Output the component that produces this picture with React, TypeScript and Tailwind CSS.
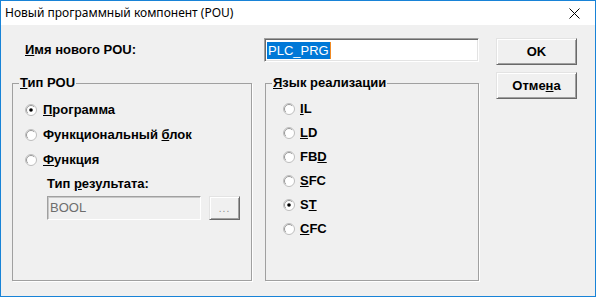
import React from 'react'

function Radio({ checked }: { checked?: boolean }) {
  return (
    <svg width="12" height="12" viewBox="0 0 12 12" className="shrink-0">
      <circle cx="6" cy="6" r="5.5" fill="#fff" stroke="#bcbcbc" />
      <path d="M2.8 9.2 A4.5 4.5 0 0 1 9.2 2.8" fill="none" stroke="#9a9a9a" />
      {checked && <circle cx="6" cy="6" r="1.8" fill="#000" />}
    </svg>
  )
}

function Option({ checked, children, gap }: { checked?: boolean; children: React.ReactNode; gap: string }) {
  return (
    <div className={`flex items-center ${gap}`}>
      <Radio checked={checked} />
      <span className="font-bold text-[13px] leading-[16px] text-black">{children}</span>
    </div>
  )
}

function Btn({ children, w, h, disabled }: { children: React.ReactNode; w: string; h: string; disabled?: boolean }) {
  return (
    <div
      className={`${w} ${h} flex items-center justify-center border border-t-[#e3e3e3] border-l-[#e3e3e3] border-b-[#696969] border-r-[#696969] bg-[#f0f0f0] shadow-[inset_1px_1px_0_#fff,inset_-1px_-1px_0_#a0a0a0] text-[13px] font-bold ${disabled ? 'text-[#8d8d8d]' : 'text-black'}`}
    >
      <span>{children}</span>
    </div>
  )
}

export default function App() {
  return (
    <div className="w-[596px] h-[297px] border border-[#1883d7] bg-[#f0f0f0] flex flex-col font-['Liberation_Sans',Arial,sans-serif] overflow-hidden">
      <div className="h-[24px] bg-white flex items-center justify-between pl-[4px] pr-[15px]">
        <span className="text-[12px] font-['Noto_Sans',sans-serif] text-black">Новый программный компонент (POU)</span>
        <svg width="11" height="11" viewBox="0 0 11 11">
          <path d="M0.5 0.5 L10.5 10.5 M10.5 0.5 L0.5 10.5" stroke="#000" strokeWidth="1" />
        </svg>
      </div>

      <div className="flex-1 flex pt-[13px] pl-[11px]">
        <div className="w-[467px] flex flex-col">
          <div className="flex items-center h-[24px]">
            <span className="pl-[13px] font-bold text-[13px] text-black">
              <u>И</u>мя нового POU:
            </span>
            <div className="ml-auto w-[215px] h-[24px] bg-white border border-t-[#a0a0a0] border-l-[#a0a0a0] border-b-white border-r-white shadow-[inset_1px_1px_0_#696969,inset_-1px_-1px_0_#e3e3e3] flex items-center pl-[2px]">
              <span className="bg-[#0078d7] text-white text-[13px] leading-[17px] px-[1px] border-r border-r-[#f08a24]">PLC_PRG</span>
            </div>
          </div>

          <div className="flex gap-[13px] mt-[13px]">
            <fieldset className="w-[240px] h-[206px] border border-[#a0a0a0] shadow-[1px_1px_0_#fff] p-0">
              <legend className="ml-[6px] px-[1px] font-bold text-[13px] leading-[16px] text-black">
                <u>Т</u>ип POU
              </legend>
              <div className="flex flex-col pl-[12px] pt-[6px]">
                <div className="h-[25px] flex items-center">
                  <Option checked gap="gap-[6px]"><u>П</u>рограмма</Option>
                </div>
                <div className="h-[25px] flex items-center">
                  <Option gap="gap-[6px]">Функциональный <u>б</u>лок</Option>
                </div>
                <div className="h-[25px] flex items-center">
                  <Option gap="gap-[6px]"><u>Ф</u>ункция</Option>
                </div>
                <div className="h-[24px] flex items-center pl-[22px]">
                  <span className="font-bold text-[13px] text-black">Тип <u>р</u>езультата:</span>
                </div>
                <div className="flex items-center pl-[22px] gap-[8px]">
                  <div className="w-[154px] h-[24px] border border-t-[#a0a0a0] border-l-[#a0a0a0] border-b-white border-r-white shadow-[inset_1px_1px_0_#c8c8c8] flex items-center pl-[2px] text-[13px] text-[#6d6d6d]">
                    BOOL
                  </div>
                  <Btn w="w-[31px]" h="h-[24px]" disabled>
                    <span className="text-[10px] font-normal tracking-[1px] leading-none">...</span>
                  </Btn>
                </div>
              </div>
            </fieldset>

            <fieldset className="w-[214px] h-[206px] border border-[#a0a0a0] shadow-[1px_1px_0_#fff] p-0">
              <legend className="ml-[6px] px-[1px] font-bold text-[13px] leading-[16px] text-black">
                <u>Я</u>зык реализации
              </legend>
              <div className="flex flex-col pl-[17px] pt-[6px]">
                {[
                  [<><u>I</u>L</>, false],
                  [<><u>L</u>D</>, false],
                  [<>FB<u>D</u></>, false],
                  [<><u>S</u>FC</>, false],
                  [<>S<u>T</u></>, true],
                  [<><u>C</u>FC</>, false],
                ].map(([label, checked], i) => (
                  <div key={i} className="h-[24px] flex items-center">
                    <Option checked={checked as boolean} gap="gap-[5px]">{label as React.ReactNode}</Option>
                  </div>
                ))}
              </div>
            </fieldset>
          </div>
        </div>

        <div className="ml-[17px] flex flex-col gap-[7px]">
          <Btn w="w-[81px]" h="h-[27px]">OK</Btn>
          <Btn w="w-[81px]" h="h-[27px]">Отме<u>н</u>а</Btn>
        </div>
      </div>
    </div>
  )
}
